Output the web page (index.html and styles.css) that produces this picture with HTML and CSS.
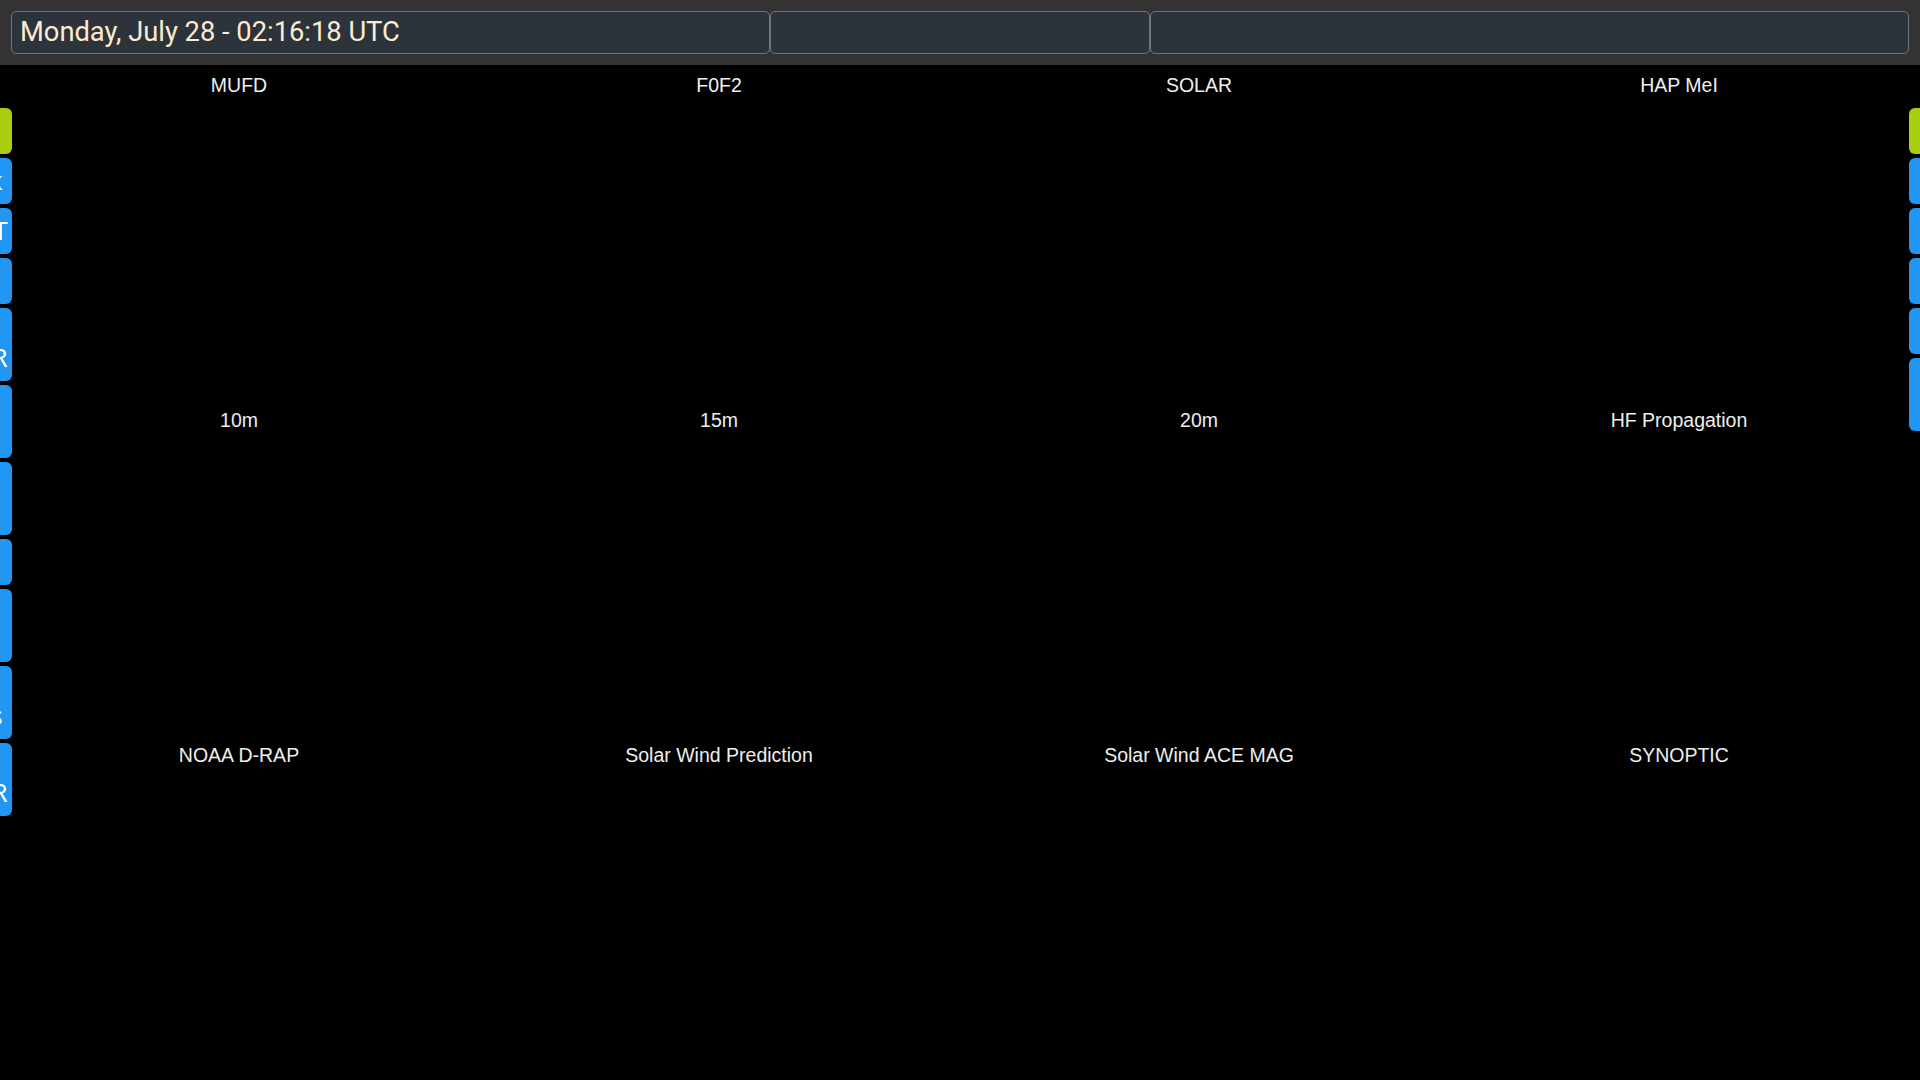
FILE: index.html
```html
<!DOCTYPE html>
<html lang="en">
<head>
    <meta charset="UTF-8">
    <meta name="viewport" content="width=device-width, initial-scale=1.0">
    <title>Dashboard</title>
    <link rel="stylesheet" href="styles.css">
</head>
<body>
    <!-- Top bar: clock + two empty slots -->
    <div class="topbar">
        <div class="topbox" id="clock">Monday, July 28 - 02:16:18 UTC</div>
        <div class="topbox"></div>
        <div class="topbox"></div>
    </div>

    <!-- Tile grid -->
    <div class="grid">
        <div class="tile"><div class="tile-title">MUFD</div></div>
        <div class="tile"><div class="tile-title">F0F2</div></div>
        <div class="tile"><div class="tile-title">SOLAR</div></div>
        <div class="tile"><div class="tile-title">HAP MeI</div></div>
        <div class="tile"><div class="tile-title">10m</div></div>
        <div class="tile"><div class="tile-title">15m</div></div>
        <div class="tile"><div class="tile-title">20m</div></div>
        <div class="tile"><div class="tile-title">HF Propagation</div></div>
        <div class="tile"><div class="tile-title">NOAA D-RAP</div></div>
        <div class="tile"><div class="tile-title">Solar Wind Prediction</div></div>
        <div class="tile"><div class="tile-title">Solar Wind ACE MAG</div></div>
        <div class="tile"><div class="tile-title">SYNOPTIC</div></div>
    </div>

    <!-- Left slide menu -->
    <div class="side side-left">
        <div class="tab green tab-off">Refresh</div>
        <div class="tab tab-far">Feedback</div>
        <div class="tab">CONTEST</div>
        <div class="tab tab-off">POTA</div>
        <div class="tab">DX<br>CLUSTER</div>
        <div class="tab tab-off">LIGHTNING<br>MAP</div>
        <div class="tab tab-off">PSK<br>REPORTER</div>
        <div class="tab tab-off">RADAR</div>
        <div class="tab tab-off">SOLAR<br>DATA</div>
        <div class="tab tab-far">Band<br>Conditions</div>
        <div class="tab">WX<br>RADAR</div>
    </div>

    <!-- Right slide menu -->
    <div class="side side-right">
        <div class="tab green">Back</div>
        <div class="tab">CLUBLOG</div>
        <div class="tab">TIME.IS</div>
        <div class="tab">WINDY</div>
        <div class="tab">YOUTUBE</div>
        <div class="tab">PI-STAR<br>LOCAL</div>
    </div>
</body>
</html>
```

FILE: styles.css
```css
html, body {
    margin: 0;
    padding: 0;
    background: #000;
    overflow: hidden;
}
body {
    width: 1920px;
    height: 1080px;
    font-family: "Liberation Sans", Arial, sans-serif;
    color: #eeeeee;
}

/* top bar */
.topbar {
    display: grid;
    grid-template-columns: 2fr 1fr 2fr;
    padding: 11px;
    background: #333333;
    height: 43px;
}
.topbox {
    box-sizing: border-box;
    height: 43px;
    background: #2c333b;
    border: 1px solid #6c757d;
    border-radius: 5px;
    color: #fdebd0;
    font-family: Roboto, "Liberation Sans", sans-serif;
    font-size: 27.3px;
    line-height: 41px;
    padding: 0 8px;
    white-space: nowrap;
    overflow: hidden;
}

/* tiles */
.grid {
    display: grid;
    grid-template-columns: repeat(4, 1fr);
    grid-template-rows: repeat(3, 335px);
}
.tile {
    text-align: center;
    padding-top: 9px;
}
.tile-title {
    font-size: 19.5px;
    color: #eeeeee;
    transform: translateX(-1px);
}

/* side menus (slid out of view) */
.side {
    position: fixed;
    top: 108px;
    width: 250px;
    display: flex;
    flex-direction: column;
    gap: 4px;
}
.side-left {
    left: -238px;
    align-items: flex-end;
}
.side-right { right: -239px; }
.tab {
    box-sizing: border-box;
    background: #2196f3;
    color: #fff;
    font-family: "Noto Sans", "Open Sans", sans-serif;
    font-size: 26px;
    line-height: 27px;
    padding: 9px 4px 10px 4px;
    white-space: nowrap;
}
.side-left .tab { border-radius: 0 6px 6px 0; }
.side-right .tab {
    border-radius: 6px 0 0 6px;
    padding-left: 40px;
    color: #2196f3;
}
.tab.green { background: #aacf0f; }
.side-right .tab.green { color: #aacf0f; }
.tab-far { padding-right: 9px; }
.tab-off { padding-right: 24px; }
```
